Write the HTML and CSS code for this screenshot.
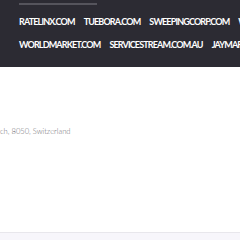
FILE: index.html
```html
<!DOCTYPE html>
<html lang="en">
<head>
  <meta charset="UTF-8">
  <title>Clients</title>
  <link rel="stylesheet" href="styles.css">
</head>
<body>

  <header class="clientes">
    <div class="linha"></div>
    <ul class="lista">
      <li>RATELINX.COM</li>
      <li>TUEBORA.COM</li>
      <li>SWEEPINGCORP.COM</li>
      <li>WEBSTAURANTSTORE.COM</li>
    </ul>
    <ul class="lista">
      <li>WORLDMARKET.COM</li>
      <li>SERVICESTREAM.COM.AU</li>
      <li>JAYMART.COM</li>
    </ul>
  </header>

  <main class="conteudo">
    <p class="endereco">ch, 8050, Switzerland</p>
  </main>

  <footer class="rodape"></footer>

</body>
</html>
```

FILE: styles.css
```css
/* Reset */
* {
  margin: 0;
  padding: 0;
  box-sizing: border-box;
}

body {
  width: 240px;
  height: 240px;
  overflow: hidden;
  background: #ffffff;
  font-family: Lato, "Open Sans", sans-serif;
}

.clientes {
  background: #2c2b33;
  height: 67px;
  padding: 3px 0 0 19px;
  overflow: hidden;
}

.linha {
  width: 78px;
  height: 2px;
  background: #55545c;
  margin-bottom: 5px;
}

.lista {
  list-style: none;
  display: flex;
  gap: 9px;
  white-space: nowrap;
  height: 23px;
  align-items: center;
}

.lista li {
  color: #ffffff;
  font-size: 9px;
  font-weight: 700;
  letter-spacing: -0.85px;
}

.conteudo {
  height: 165px;
  padding-top: 59px;
}

.endereco {
  color: #6f6e74;
  font-size: 7.6px;
  font-weight: 300;
}

.rodape {
  height: 8px;
  background: #f7f6fb;
  border-top: 1px solid #e8e7ec;
}
```
